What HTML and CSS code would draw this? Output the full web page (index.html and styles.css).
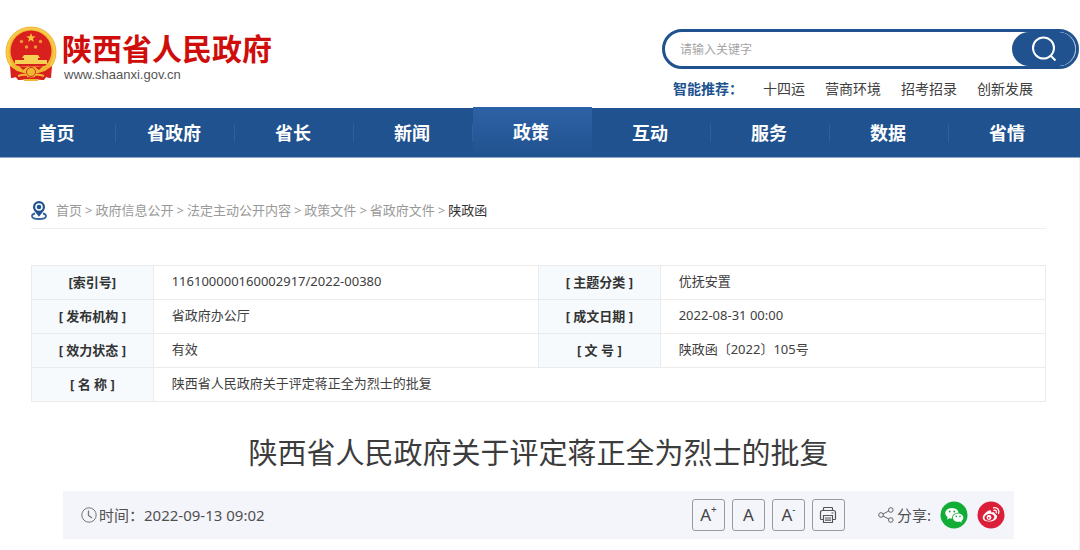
FILE: index.html
```html
<!DOCTYPE html>
<html lang="zh-CN">
<head>
<meta charset="utf-8">
<title>陕西省人民政府关于评定蒋正全为烈士的批复</title>
<link rel="stylesheet" href="styles.css">
</head>
<body>
<header class="header">
  <a class="brand" href="#">
    <svg class="emblem" viewBox="0 0 52 56" aria-hidden="true">
      <path d="M6 38 6 52l5-1 3 3 7-1h10l7 1 3-3 5 1V38z" fill="#d8201c"/>
      <circle cx="26" cy="26" r="25.500" fill="#f2b632"/>
      <circle cx="26" cy="26" r="23.500" fill="none" stroke="#f7cc4e" stroke-width="2"/>
      <circle cx="26" cy="25" r="20.500" fill="#d9201f"/>
      <path d="m26 7 1.200 3.300 3.500.1-2.800 2.200 1 3.400-2.900-2-2.900 2 1-3.400-2.800-2.200 3.500-.1z" fill="#f9c33c"/>
      <g fill="#ef9a35"><circle cx="16.500" cy="15.500" r="1.700"/><circle cx="35.500" cy="15.500" r="1.700"/><circle cx="21.500" cy="21" r="1.700"/><circle cx="30.500" cy="21" r="1.700"/></g>
      <path d="M19 29h14l2 3h-2v2h9v4H10v-4h9v-2h-2z" fill="#f8cf55"/>
      <path d="M6 39q20 3 40 0l-4 6q-8 5-16 5t-16-5z" fill="#f2b632"/>
      <path d="M14 40q6 1 8 1l-4 3zM38 40q-6 1-8 1l4 3z" fill="#d8201c"/>
      <path d="m5 40 7 5 10 3v5l-9 1-2-3-5 1zM47 40l-7 5-10 3v5l9 1 2-3 5 1z" fill="#d8201c"/>
      <circle cx="26" cy="46" r="4.500" fill="#f2b632" stroke="#c8381c"/>
      <path d="M13 50q6-2 9-1M39 50q-6-2-9-1M19 54h14" fill="none" stroke="#f2b632" stroke-width="2"/>
    </svg>
    <span class="brand-text">
      <span class="brand-name">陕西省人民政府</span>
      <span class="brand-url">www.shaanxi.gov.cn</span>
    </span>
  </a>
  <div class="tools">
    <form class="search" role="search">
      <input class="search-input" type="text" placeholder="请输入关键字" aria-label="请输入关键字">
      <button class="search-button" type="button" aria-label="搜索">
        <svg width="28" height="28" viewBox="0 0 28 28" fill="none" stroke="#fff" stroke-width="2" aria-hidden="true"><circle cx="13.500" cy="13" r="10.500"/><path d="m20.500 20.500 5 5"/></svg>
      </button>
    </form>
    <div class="hot">
      <strong class="hot-label">智能推荐：</strong>
      <a href="#">十四运</a><a href="#">营商环境</a><a href="#">招考招录</a><a href="#">创新发展</a>
    </div>
  </div>
</header>

<nav class="nav" aria-label="主导航">
  <a href="#">首页</a><a href="#">省政府</a><a href="#">省长</a><a href="#">新闻</a><a class="active" href="#">政策</a><a href="#">互动</a><a href="#">服务</a><a href="#">数据</a><a href="#">省情</a>
</nav>

<main class="main">
  <nav class="crumbs" aria-label="当前位置">
    <svg class="pin" width="16" height="19" viewBox="0 0 16 19" fill="none" aria-hidden="true">
      <path d="M4 12.500C1.500 13 1 14 1 15c0 2 3 3 7 3s7-1 7-3c0-1-.5-2-3-2.500" stroke="#3565a0" stroke-width="1.800"/>
      <path fill-rule="evenodd" d="M8 0a6 6 0 0 1 6 6c0 3.500-3.500 6-6 9.800C5.500 12 2 9.500 2 6a6 6 0 0 1 6-6zm0 2.200a3.800 3.800 0 1 0 0 7.600 3.800 3.800 0 0 0 0-7.600z" fill="#20528f"/>
      <circle cx="8" cy="6" r="2.300" fill="#20528f"/>
    </svg>
    <a href="#">首页</a><span>&gt;</span><a href="#">政府信息公开</a><span>&gt;</span><a href="#">法定主动公开内容</a><span>&gt;</span><a href="#">政策文件</a><span>&gt;</span><a href="#">省政府文件</a><span>&gt;</span><a class="current" href="#" aria-current="page">陕政函</a>
  </nav>

  <table class="meta">
    <colgroup><col class="col-label"><col class="col-value"><col class="col-label"><col class="col-value"></colgroup>
    <tbody>
      <tr><th scope="row">[索引号]</th><td>116100000160002917/2022-00380</td><th scope="row">[ 主题分类 ]</th><td>优抚安置</td></tr>
      <tr><th scope="row">[ 发布机构 ]</th><td>省政府办公厅</td><th scope="row">[ 成文日期 ]</th><td>2022-08-31 00:00</td></tr>
      <tr><th scope="row">[ 效力状态 ]</th><td>有效</td><th scope="row">[ 文 号 ]</th><td>陕政函〔2022〕105号</td></tr>
      <tr><th scope="row">[ 名 称 ]</th><td colspan="3">陕西省人民政府关于评定蒋正全为烈士的批复</td></tr>
    </tbody>
  </table>

  <h1 class="title">陕西省人民政府关于评定蒋正全为烈士的批复</h1>

  <div class="info">
    <svg width="16" height="16" viewBox="0 0 16 16" fill="none" stroke="#777" aria-hidden="true"><circle cx="8" cy="8" r="7.200"/><path d="M7.500 3.500v5l3.500 2.500" stroke-width="1.300"/></svg>
    <span class="time">时间：<time datetime="2022-09-13T09:02">2022-09-13 09:02</time></span>
    <div class="sizes">
      <button type="button" aria-label="放大字体">A<sup>+</sup></button>
      <button type="button" aria-label="默认字体">A</button>
      <button type="button" aria-label="缩小字体">A<sup>-</sup></button>
      <button type="button" aria-label="打印">
        <svg width="18" height="18" viewBox="0 0 18 18" fill="none" stroke="#555" stroke-width="1.200" aria-hidden="true"><path d="M4.500 4.500V2.300q0-.8.8-.8h7.400q.8 0 .8.800v2.200M4.500 13.500H2.300q-.8 0-.8-.8V6.500q0-2 2-2h11q2 0 2 2v6.200q0 .8-.8.800h-2.200M4.500 9.500h9v7h-9zM6 12h6M6 14.200h6M12.500 7h2"/></svg>
      </button>
    </div>
    <div class="share">
      <svg width="16" height="16" viewBox="0 0 16 16" fill="none" stroke="#666" aria-hidden="true"><circle cx="3" cy="8" r="2.300"/><circle cx="12.800" cy="3" r="2.300"/><circle cx="12.800" cy="13" r="2.300"/><path d="m5 7 5.800-3M5 9l5.800 3"/></svg>
      <span class="share-label">分享:</span>
      <a href="#" aria-label="微信"><svg width="28" height="28" viewBox="0 0 28 28" aria-hidden="true">
        <circle cx="14" cy="14" r="13.500" fill="#12ad37"/>
        <path d="M12 7c3.500 0 6.200 2 6.600 4.800-3.700-.3-6.800 2.100-6.500 5.600-.9.100-1.700 0-2.500-.2L7 18.500l.7-2.300C6.200 15.200 5.300 13.700 5.300 12c0-2.800 3-5 6.700-5z" fill="#fff"/>
        <path d="M18.100 12.500c2.900 0 5.200 1.900 5.200 4.200 0 1.300-.7 2.500-1.900 3.200l.5 1.800-2-1.100c-3.600.9-7-1-7-3.900 0-2.300 2.300-4.200 5.200-4.200z" fill="#fff"/>
        <g fill="#12ad37"><circle cx="9.700" cy="10.500" r=".9"/><circle cx="14.300" cy="10.500" r=".9"/><circle cx="16.300" cy="15.400" r=".8"/><circle cx="20" cy="15.400" r=".8"/></g>
      </svg></a>
      <a href="#" aria-label="微博"><svg width="28" height="28" viewBox="0 0 28 28" aria-hidden="true">
        <circle cx="14" cy="14" r="13.500" fill="#dc1f38"/>
        <path d="M12 9.500c1.500-.6 2.600.3 2.200 2 1.900-.7 4-.4 3.700 1.500 2.500.8 2.800 3.400 1 5.200-3.300 3.400-12.700 3.200-13.200-1.200C5.400 14.500 9 10.500 12 9.500z" fill="#fff"/>
        <ellipse cx="12.400" cy="16.300" rx="5" ry="3.400" transform="rotate(-8 12.400 16.300)" fill="#dc1f38"/>
        <circle cx="12" cy="16.500" r="2.400" fill="#fff"/><circle cx="11.700" cy="16.800" r=".9" fill="#dc1f38"/>
        <path d="M16.500 6.800c3.700-.9 6.300 2.200 5 5.700M17 9.300c1.600-.4 2.800.9 2.300 2.500" fill="none" stroke="#fff" stroke-width="1.300" stroke-linecap="round"/>
      </svg></a>
    </div>
  </div>
</main>
</body>
</html>
```
FILE: styles.css
```css
* { box-sizing: border-box; }

body {
  margin: 0;
  background: #fff;
  color: #404040;
  font: 13px/20px "Noto Sans", "Noto Sans CJK SC", sans-serif;
}

a { color: inherit; text-decoration: none; }
svg { display: block; flex: none; }

.header {
  display: flex;
  justify-content: space-between;
  align-items: flex-start;
  padding: 26px 1px 8px 5px;
}

.brand { display: flex; gap: 5px; }
.emblem { width: 52px; height: 56px; }
.brand-text { display: flex; flex-direction: column; }
.brand-name {
  color: #cf0d0b;
  font: bold 30px/42px "Noto Sans CJK SC", sans-serif;
}
.brand-url {
  padding-left: 2px;
  color: #555;
  font: 13px/14px "Liberation Sans", sans-serif;
}

.tools { width: 417px; padding-top: 3px; }
.search {
  display: flex;
  height: 40px;
  border: 3px solid #20528f;
  border-radius: 20px;
  overflow: hidden;
}
.search-input {
  flex: 1;
  min-width: 0;
  padding: 0 15px;
  border: 0;
  outline: 0;
  background: transparent;
  font: 12px/20px "Noto Sans CJK SC", sans-serif;
}
.search-input::placeholder { color: #a5a5a5; }
.search-button {
  display: flex;
  align-items: center;
  justify-content: center;
  width: 64px;
  padding: 0;
  border: 0;
  border-right: 1px solid #9db6d4;
  border-radius: 18px;
  background: #20528f;
}
.hot {
  display: flex;
  gap: 20px;
  padding: 10px 0 1px 11px;
  font-size: 14px;
  line-height: 20px;
}
.hot-label { color: #20528f; }

.nav {
  display: grid;
  grid-template-columns: 116fr repeat(8, 119fr);
  padding-right: 12px;
  border-bottom: 1px solid #8ca8cb;
  background: #20528f;
  color: #fff;
  font-size: 18px;
  font-weight: bold;
  line-height: 50px;
  text-align: center;
}
.nav a {
  height: 49px;
  padding-right: 3px;
  background: linear-gradient(#2f609c, #2f609c) right center / 1px 18px no-repeat;
}
.nav a:last-child { background: none; }
.nav .active {
  height: 50px;
  margin-top: -1px;
  background: linear-gradient(#2e62a6, #20528f);
}

.main {
  padding: 41px 33px 12px 31px;
  border-right: 1px solid #f0f0f0;
}

.crumbs {
  display: flex;
  align-items: center;
  gap: 3px;
  padding-bottom: 6px;
  border-bottom: 1px solid #eee;
  color: #999;
  line-height: 23px;
}
.pin { margin-right: 6px; }
.crumbs .current { color: #333; }

.meta {
  width: 100%;
  margin-top: 36px;
  border-collapse: collapse;
  table-layout: fixed;
}
.col-label { width: 12%; }
.col-value { width: 38%; }
.meta th, .meta td { border: 1px solid #ebebeb; }
.meta th { padding: 0; background: #f6fafd; line-height: 33px; color: #333; }
.meta td { padding: 0 18px 2px; line-height: 31px; }

.title {
  margin: 31px 0 18px;
  color: #3c3c3c;
  font-size: 29px;
  font-weight: normal;
  line-height: 40px;
  text-align: center;
}

.info {
  display: flex;
  align-items: center;
  min-height: 48px;
  margin: 0 32px;
  padding: 0 9px 0 18px;
  background: #f4f5fa;
  color: #505050;
  font-size: 15px;
}
.time { margin-left: 2px; }
.sizes { display: flex; gap: 7px; margin-left: auto; }
.sizes button {
  display: flex;
  align-items: center;
  justify-content: center;
  width: 33px;
  height: 32px;
  padding: 0;
  border: 1px solid #999;
  border-radius: 3px;
  background: transparent;
  color: #444;
  font: 17px/30px "Noto Sans", sans-serif;
}
.sizes sup { align-self: flex-start; font-size: 10px; line-height: 18px; }
.share { display: flex; align-items: center; gap: 9px; margin-left: 33px; }
.share-label { margin-left: -6px; }
```
